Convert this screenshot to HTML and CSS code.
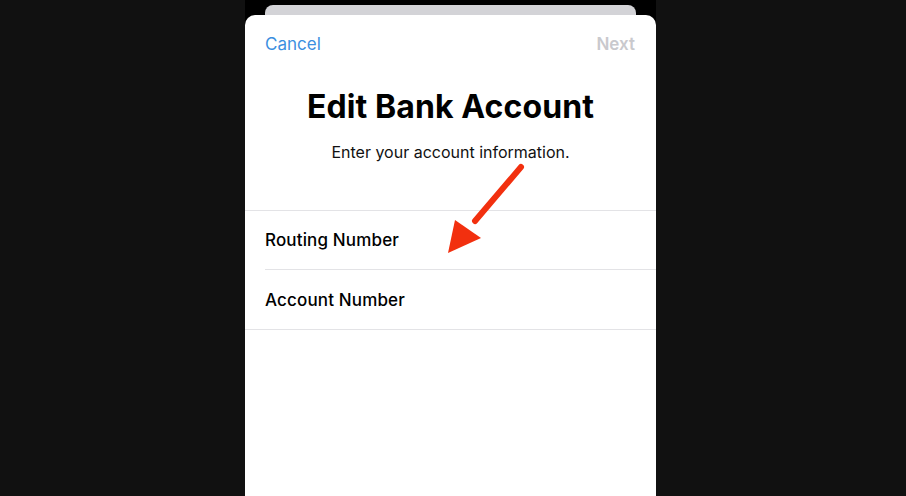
FILE: index.html
```html
<!DOCTYPE html>
<html>
<head>
<meta charset="utf-8">
<link rel="stylesheet" href="styles.css">
</head>
<body>
<div class="screen">
  <div class="back-card"></div>
  <div class="sheet">
    <div class="nav">
      <span class="cancel">Cancel</span>
      <span class="next">Next</span>
    </div>
    <h1 class="title">Edit Bank Account</h1>
    <p class="subtitle">Enter your account information.</p>
    <div class="form">
      <div class="row first">Routing Number</div>
      <div class="row">Account Number</div>
    </div>
    <svg class="arrow" width="100" height="110" viewBox="0 0 100 110">
      <line x1="76" y1="12" x2="30" y2="66" stroke="#f2300f" stroke-width="6" stroke-linecap="round"/>
      <polygon points="3,98 10,65 36,83" fill="#f2300f"/>
    </svg>
  </div>
</div>
</body>
</html>
```
FILE: styles.css
```css
html, body {
  margin: 0;
  padding: 0;
  background: #111111;
  height: 100%;
}
body {
  font-family: Inter, "Noto Sans", sans-serif;
  -webkit-font-smoothing: antialiased;
}
.screen {
  width: 411px;
  margin-left: 245px;
  height: 496px;
  background: #000;
  display: flex;
  flex-direction: column;
  overflow: hidden;
}
.back-card {
  margin: 5px 20px 0;
  height: 10px;
  background: #d3d3d7;
  border-radius: 8px 8px 0 0;
  flex: none;
}
.sheet {
  position: relative;
  flex: 1;
  background: #fff;
  border-radius: 10px 10px 0 0;
}
.nav {
  display: flex;
  justify-content: space-between;
  padding: 17px 20px 0 20px;
  height: 40px;
  font-size: 17px;
  line-height: 24px;
}
.cancel {
  color: #3b8fe0;
}
.next {
  color: #c9c9cd;
  font-weight: 600;
  margin-right: 1px;
}
.title {
  margin: 15px 0 0;
  text-align: center;
  font-size: 32px;
  line-height: 40px;
  font-weight: 700;
  color: #000;
  letter-spacing: 0.1px;
}
.subtitle {
  margin: 14px 0 0;
  text-align: center;
  font-size: 16px;
  line-height: 22px;
  color: #111;
}
.form {
  margin-top: 47px;
  border-top: 1px solid #e3e3e6;
  border-bottom: 1px solid #e3e3e6;
}
.row {
  margin-left: 20px;
  height: 59px;
  display: flex;
  align-items: center;
  font-size: 17px;
  font-weight: 500;
  color: #000;
  letter-spacing: 0.15px;
}
.row.first {
  height: 58px;
  border-bottom: 1px solid #e3e3e6;
}
.arrow {
  position: absolute;
  top: 140px;
  left: 200px;
}
```
